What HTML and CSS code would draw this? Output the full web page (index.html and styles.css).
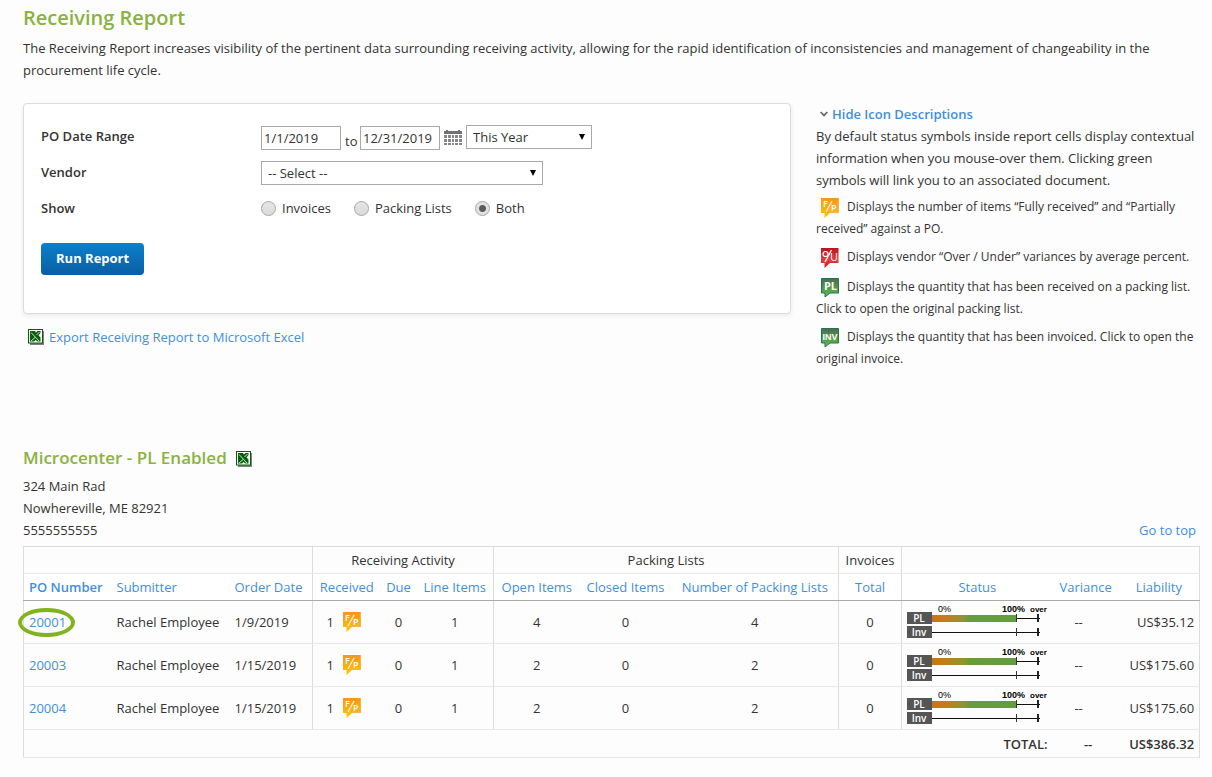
FILE: index.html
```html
<!DOCTYPE html>
<html lang="en">
<head>
<meta charset="utf-8">
<title>Receiving Report</title>
<link rel="stylesheet" href="styles.css">
</head>
<body>
<svg class="defs" width="0" height="0" aria-hidden="true">
  <defs>
    <linearGradient id="g-orange" x1="0" y1="0" x2="0" y2="1"><stop offset="0" stop-color="#f7941d"/><stop offset="1" stop-color="#fdc60b"/></linearGradient>
    <linearGradient id="g-red" x1="0" y1="0" x2="0" y2="1"><stop offset="0" stop-color="#b8141f"/><stop offset=".6" stop-color="#e2403f"/><stop offset="1" stop-color="#c91522"/></linearGradient>
    <linearGradient id="g-green" x1="0" y1="0" x2="0" y2="1"><stop offset="0" stop-color="#4d6b50"/><stop offset="1" stop-color="#5fc24a"/></linearGradient>
    <linearGradient id="g-bar" x1="0" y1="0" x2="1" y2="0"><stop offset="0" stop-color="#cc7414"/><stop offset=".15" stop-color="#c57c18"/><stop offset=".38" stop-color="#8d962f"/><stop offset=".44" stop-color="#689c3a"/><stop offset="1" stop-color="#639d40"/></linearGradient>
    <symbol id="fp" viewBox="0 0 18 20">
      <path d="M0 0H18V15H9L3.500 20V15H0Z" fill="url(#g-orange)"/>
      <path d="M17.500 0V14.500H9" fill="none" stroke="#f7b24a"/>
      <text x="2" y="9" class="tag-text tag-small">F</text><text x="10" y="13" class="tag-text tag-small">P</text>
      <path d="M5 14L11 3" stroke="#fff2d0" stroke-width="1.300"/>
    </symbol>
    <symbol id="ou" viewBox="0 0 18 20">
      <path d="M0 0H17.500V15H9L3.500 20V15H0Z" fill="url(#g-red)"/>
      <text x="1" y="9" class="tag-text tag-small">O</text><text x="9" y="13" class="tag-text tag-mid">U</text>
      <path d="M4 14L10.500 2" stroke="#fff" stroke-width="1.300"/>
    </symbol>
    <symbol id="pl" viewBox="0 0 18 20">
      <path d="M.500 .500H17.500V15H9L4 19V15H.500Z" fill="url(#g-green)" stroke="#23735a"/>
      <text x="9.500" y="12" class="tag-text tag-bold" text-anchor="middle">PL</text>
    </symbol>
    <symbol id="inv" viewBox="0 0 18 20">
      <path d="M.500 .500H17.500V15H9L4 19V15H.500Z" fill="url(#g-green)" stroke="#23735a"/>
      <text x="9" y="12" class="tag-text tag-narrow" text-anchor="middle">INV</text>
    </symbol>
    <symbol id="excel" viewBox="0 0 16 16">
      <path d="M2 2H16V16H2Z" fill="#555" opacity=".75"/>
      <path d="M0 0H15V14.500H0Z" fill="#075e0a"/>
      <path d="M1 1H14V13.500H1Z" fill="#fff"/>
      <path d="M2 2H7L8 3.500L9.500 2H12.500V4L10.500 6.500L12.500 8.500V12.500H9.500L7.500 11L6 12.500H2Z" fill="#075e0a"/>
      <path d="M3 3.500L11 12M3 12L7 8.500M8.500 6L11.500 3" stroke="#fff" stroke-width=".8" fill="none"/>
    </symbol>
    <symbol id="status" viewBox="0 0 144 36">
      <text x="31" y="9" class="scale">0%</text>
      <text x="95" y="9" class="scale scale-bold">100%</text>
      <text x="123" y="9" class="scale scale-bold scale-over">over</text>
      <path d="M0 9H25V21H0ZM0 23H25V35H0Z" fill="#555"/>
      <text x="12" y="19" class="bar-label" text-anchor="middle">PL</text>
      <text x="12" y="33" class="bar-label" text-anchor="middle">Inv</text>
      <path d="M25 12H109V19H25Z" fill="url(#g-bar)"/>
      <path d="M109 15.500H133M25 29.500H133" stroke="#111"/>
      <path d="M109.500 11V19M109.500 25V33" stroke="#333"/>
      <path d="M131 11V19M131 25V33" stroke="#222" stroke-width="2"/>
    </symbol>
  </defs>
</svg>

<main class="page" id="top">
  <h1>Receiving Report</h1>
  <p>The Receiving Report increases visibility of the pertinent data surrounding receiving activity, allowing for the rapid identification of inconsistencies and management of changeability in the procurement life cycle.</p>

  <div class="columns">
    <div>
      <form class="filters">
        <div class="row">
          <label class="name" for="from">PO Date Range</label>
          <div class="controls dates">
            <input class="date" id="from" type="text" value="1/1/2019">
            <label class="to" for="until">to</label>
            <input class="date" id="until" type="text" value="12/31/2019">
            <button type="button" class="calendar" aria-label="Choose date">
              <svg width="18" height="16" viewBox="0 0 18 16"><path d="M0 1H2V0H4V1H14V0H16V1H18V4H0Z" fill="#707076"/><path d="M0 5H3V8H0ZM4 5H7V8H4ZM8 5H10V8H8ZM11 5H14V8H11ZM15 5H18V8H15ZM0 9H3V12H0ZM4 9H7V12H4ZM8 9H10V12H8ZM11 9H14V12H11ZM15 9H18V12H15ZM0 13H3V15H0ZM4 13H7V15H4ZM8 13H10V15H8ZM11 13H14V15H11ZM15 13H18V15H15Z" fill="#85858a"/></svg>
            </button>
            <span class="select period"><select aria-label="Period"><option>This Year</option></select></span>
          </div>
        </div>
        <div class="row">
          <label class="name" for="vendor">Vendor</label>
          <div class="controls"><span class="select vendor"><select id="vendor"><option>-- Select --</option></select></span></div>
        </div>
        <div class="row">
          <span class="name" id="show">Show</span>
          <div class="controls radios" role="radiogroup" aria-labelledby="show">
            <label><input type="radio" name="show">Invoices</label>
            <label><input type="radio" name="show">Packing Lists</label>
            <label><input type="radio" name="show" checked>Both</label>
          </div>
        </div>
        <button class="run" type="button">Run Report</button>
      </form>
      <a class="export" href="#"><svg width="16" height="16"><use href="#excel"/></svg>Export Receiving Report to Microsoft Excel</a>
    </div>

    <aside>
      <a class="toggle" href="#"><svg width="8" height="6" viewBox="0 0 8 6"><path d="M.700 1L4 4.500L7.300 1" fill="none" stroke="#666" stroke-width="1.800"/></svg>Hide Icon Descriptions</a>
      <p>By default status symbols inside report cells display contextual information when you mouse-over them. Clicking green symbols will link you to an associated document.</p>
      <ul class="legend">
        <li><svg class="tag" width="18" height="20"><use href="#fp"/></svg>Displays the number of items “Fully received” and “Partially received” against a PO.</li>
        <li><svg class="tag" width="18" height="20"><use href="#ou"/></svg>Displays vendor “Over / Under” variances by average percent.</li>
        <li><svg class="tag" width="18" height="20"><use href="#pl"/></svg>Displays the quantity that has been received on a packing list. Click to open the original packing list.</li>
        <li><svg class="tag" width="18" height="20"><use href="#inv"/></svg>Displays the quantity that has been invoiced. Click to open the original invoice.</li>
      </ul>
    </aside>
  </div>

  <section>
    <h2>Microcenter - PL Enabled <a href="#" aria-label="Export to Excel"><svg width="16" height="16"><use href="#excel"/></svg></a></h2>
    <div class="vendor-info">
      <address>324 Main Rad<br>Nowhereville, ME 82921<br>5555555555</address>
      <a href="#top">Go to top</a>
    </div>
    <table>
      <colgroup><col class="w-po"><col class="w-sub"><col class="w-date"><col class="w-rec"><col class="w-due"><col class="w-line"><col class="w-open"><col class="w-closed"><col class="w-num"><col class="w-inv"><col class="w-status"><col class="w-var"><col class="w-liab"></colgroup>
      <thead>
        <tr class="groups"><th colspan="3" class="end"></th><th colspan="3" class="end">Receiving Activity</th><th colspan="3" class="end">Packing Lists</th><th class="end">Invoices</th><th colspan="3"></th></tr>
        <tr class="heads"><th class="left sorted"><a href="#">PO Number</a></th><th class="left"><a href="#">Submitter</a></th><th class="left end"><a href="#">Order Date</a></th><th><a href="#">Received</a></th><th><a href="#">Due</a></th><th class="end"><a href="#">Line Items</a></th><th><a href="#">Open Items</a></th><th><a href="#">Closed Items</a></th><th class="end"><a href="#">Number of Packing Lists</a></th><th class="end"><a href="#">Total</a></th><th><a href="#">Status</a></th><th><a href="#">Variance</a></th><th><a href="#">Liability</a></th></tr>
      </thead>
      <tbody>
        <tr><td class="left"><a class="marked" href="#">20001</a></td><td class="left">Rachel Employee</td><td class="left end">1/9/2019</td><td><span class="received">1<svg width="18" height="20"><use href="#fp"/></svg></span></td><td>0</td><td class="end">1</td><td>4</td><td>0</td><td class="end">4</td><td class="end">0</td><td class="chart"><svg width="144" height="36"><use href="#status"/></svg></td><td class="variance">--</td><td class="right">US$35.12</td></tr>
        <tr><td class="left"><a href="#">20003</a></td><td class="left">Rachel Employee</td><td class="left end">1/15/2019</td><td><span class="received">1<svg width="18" height="20"><use href="#fp"/></svg></span></td><td>0</td><td class="end">1</td><td>2</td><td>0</td><td class="end">2</td><td class="end">0</td><td class="chart"><svg width="144" height="36"><use href="#status"/></svg></td><td class="variance">--</td><td class="right">US$175.60</td></tr>
        <tr><td class="left"><a href="#">20004</a></td><td class="left">Rachel Employee</td><td class="left end">1/15/2019</td><td><span class="received">1<svg width="18" height="20"><use href="#fp"/></svg></span></td><td>0</td><td class="end">1</td><td>2</td><td>0</td><td class="end">2</td><td class="end">0</td><td class="chart"><svg width="144" height="36"><use href="#status"/></svg></td><td class="variance">--</td><td class="right">US$175.60</td></tr>
      </tbody>
      <tfoot>
        <tr><td colspan="11" class="right">TOTAL:</td><td class="sum">--</td><td class="right">US$386.32</td></tr>
      </tfoot>
    </table>
  </section>
</main>
</body>
</html>
```
FILE: styles.css
```css
* { box-sizing: border-box; }
body {
  margin: 0;
  background: #fdfdfd;
  color: #333;
  font: 13px/22px "Open Sans", sans-serif;
}
input, select, button { font: inherit; color: inherit; }
a { color: #3f8fdd; text-decoration: none; }
svg { flex: none; }
p { margin: 0; }
.defs { position: absolute; }
.page { padding: 4px 12px 18px 23px; }

h1, h2 { color: #8ab23f; font-weight: 600; }
h1 { margin: 0 0 5px; font-size: 20px; line-height: 28px; }
h2 {
  display: flex;
  align-items: center;
  gap: 9px;
  margin: 0 0 4px;
  font-size: 17px;
  line-height: 26px;
}
h2 a { display: flex; padding-top: 2px; }

.columns {
  display: grid;
  grid-template-columns: 768fr 384fr;
  gap: 25px;
  margin: 22px 0 75px;
}

.filters {
  padding: 14px 17px 38px;
  background: #fff;
  border: 1px solid #dcdcdc;
  border-radius: 4px;
  box-shadow: 0 2px 4px rgba(0, 0, 0, .08);
}
.row { display: flex; align-items: center; min-height: 36px; }
.name { flex: 0 0 220px; font-weight: 600; }
.controls { display: flex; align-items: center; padding-top: 2px; }
.dates { gap: 4px; padding-top: 4px; }
.date {
  width: 80px;
  height: 24px;
  padding: 0 2px;
  background: #fff;
  border: 1px solid #a9a9a9;
}
.to { width: 11px; padding-top: 6px; }
.calendar {
  display: flex;
  padding: 0;
  background: none;
  border: 0;
}
.select { position: relative; display: block; }
.select select {
  display: block;
  width: 100%;
  height: 24px;
  padding: 0 6px;
  appearance: none;
  background: #fff;
  border: 1px solid #a9a9a9;
  border-radius: 0;
}
.select::after {
  content: "";
  position: absolute;
  top: 9px;
  right: 7px;
  border: 3px solid transparent;
  border-top: 6px solid #000;
  border-bottom: 0;
  pointer-events: none;
}
.period { width: 126px; padding-bottom: 2px; }
.vendor { width: 282px; }
.radios { gap: 23px; padding-top: 0; }
.radios label { display: flex; align-items: center; gap: 6px; }
.radios input {
  width: 15px;
  height: 15px;
  margin: 0;
  appearance: none;
  background: linear-gradient(#e6e6e6, #dadada);
  border: 1px solid #a5a5a5;
  border-radius: 50%;
}
.radios input:checked { background: radial-gradient(circle, #5c5c5c 3px, #e2e2e2 4px); }
.run {
  display: block;
  margin-top: 17px;
  height: 32px;
  padding: 0 15px 2px;
  background: linear-gradient(#0b80cb, #0a5ea4);
  border: 0;
  border-radius: 4px;
  color: #fff;
  font-weight: 700;
}
.export {
  display: flex;
  align-items: center;
  gap: 5px;
  margin: 12px 0 0 5px;
}

.toggle {
  display: flex;
  align-items: center;
  gap: 4px;
  padding-left: 4px;
  font-weight: 600;
}
.legend {
  display: grid;
  gap: 6px;
  margin: 5px 0 0;
  padding: 0;
  list-style: none;
  font-size: 12px;
}
.legend li { min-height: 24px; }
.tag {
  float: left;
  margin: 2px 8px 0 5px;
}
.tag-text { fill: #fff; font-family: "Open Sans", sans-serif; }
.tag-small { font-size: 9px; font-weight: 600; }
.tag-mid { font-size: 11px; }
.tag-bold { font-size: 11px; font-weight: 700; }
.tag-narrow { font-family: "Liberation Sans", sans-serif; font-size: 9px; font-weight: 700; }

.vendor-info {
  display: flex;
  justify-content: space-between;
  align-items: flex-end;
  padding-right: 4px;
  margin-bottom: 5px;
}
address { font-style: normal; }

table {
  width: 100%;
  table-layout: fixed;
  border-collapse: collapse;
  border: 1px solid #dcdcdc;
}
.w-po { width: 88px; }
.w-sub { width: 118px; }
.w-date { width: 83px; }
.w-rec { width: 68px; }
.w-due { width: 36px; }
.w-line { width: 77px; }
.w-open { width: 86px; }
.w-closed { width: 92px; }
.w-num { width: 167px; }
.w-inv { width: 63px; }
.w-status { width: 151px; }
.w-var { width: 66px; }
.w-liab { width: 81px; }
th, td {
  height: 43px;
  padding: 0;
  border-bottom: 1px solid #e8e8e8;
  font-weight: 400;
  text-align: center;
  white-space: nowrap;
}
th { height: 27px; }
.heads th { background: #fff; border-bottom-color: #aaa; }
.heads .sorted { font-weight: 600; }
.end { border-right: 1px solid #dcdcdc; }
.left { padding-left: 5px; text-align: left; }
.right { padding-right: 5px; text-align: right; }
.received {
  display: flex;
  justify-content: center;
  align-items: center;
  gap: 9px;
  padding-right: 6px;
}
.chart { padding: 0 0 2px 5px; }
.chart svg { display: block; }
.variance { padding-right: 14px; }
.sum { padding-left: 5px; }
tfoot td { height: 28px; font-weight: 600; }
.scale { font: 9px "Liberation Sans", sans-serif; fill: #000; }
.scale-bold { font-weight: 700; }
.scale-over { font-size: 8px; }
.bar-label { font: 600 10px "Open Sans", sans-serif; fill: #fff; }

.marked { position: relative; }
.marked::after {
  content: "";
  position: absolute;
  inset: -5px -9px -6px -11px;
  border: 4px solid #80b31c;
  border-radius: 50%;
}
```
